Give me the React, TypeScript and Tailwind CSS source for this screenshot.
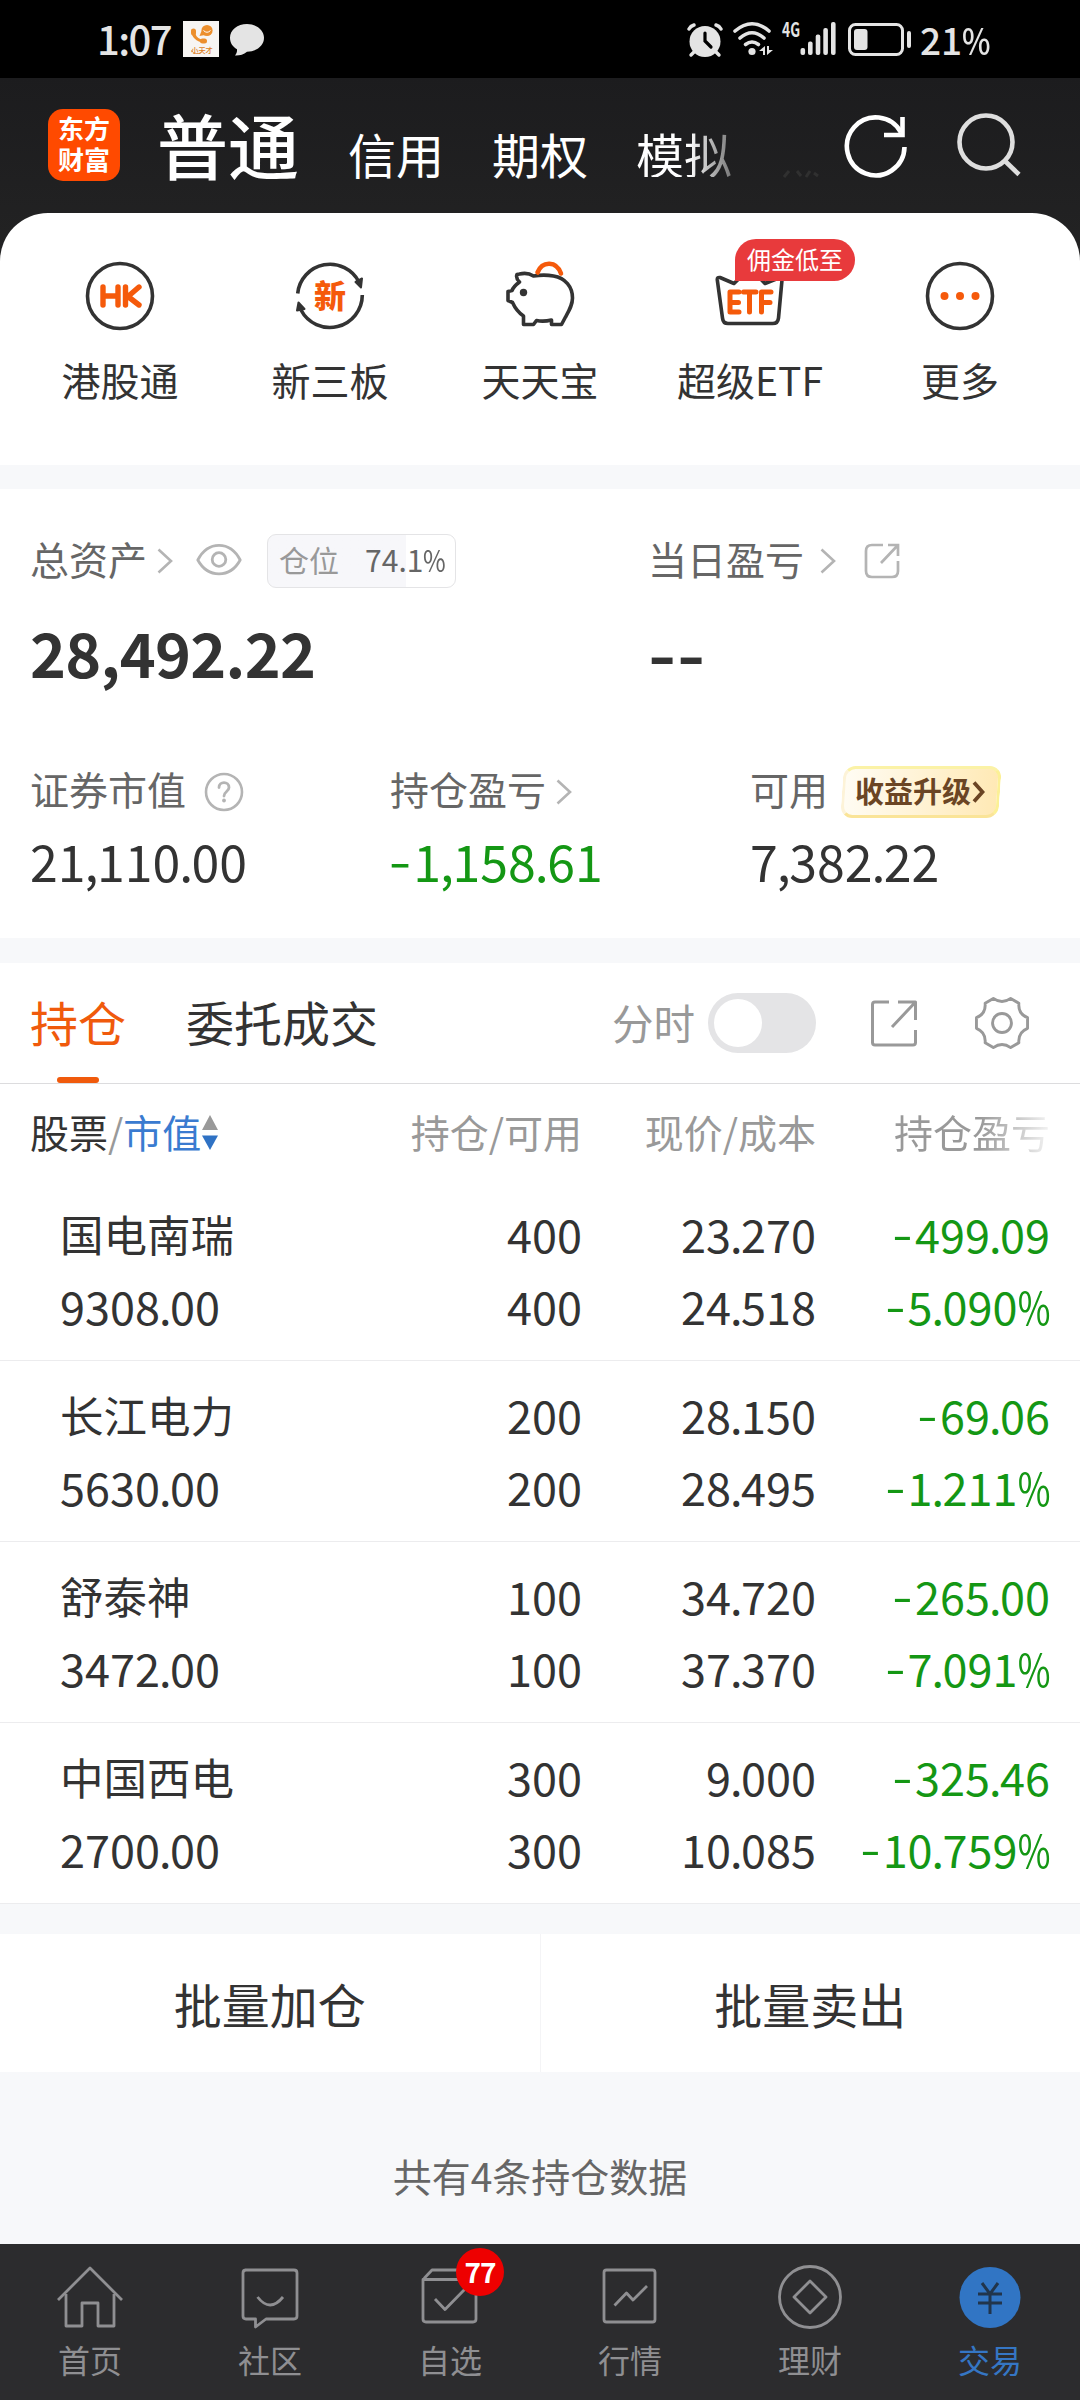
import React from "react";

function Chevron({ className = "" }: { className?: string }) {
  return (
    <svg width="16" height="26" viewBox="0 0 16 26" fill="none" className={className}>
      <path d="M1.5 1.5 L14 13 L1.5 24.5" stroke="#b4b4b4" strokeWidth="2.6" />
    </svg>
  );
}

/* Figures with a wide minus, tight separators and a narrow percent sign */
function Num({ value }: { value: string }) {
  return (
    <>
      {value.split(/([-.,%])/).map((part, i) => {
        if (part === "-")
          return (
            <span key={i} className="mr-[2px] inline-block origin-right -translate-y-[2px] scale-x-[1.3]">
              -
            </span>
          );
        if (part === "%")
          return (
            <span key={i} className="-ml-[9px] inline-block origin-right scale-x-[0.79]">
              %
            </span>
          );
        if (part === "." || part === ",")
          return (
            <span key={i} className="-ml-px -mr-[1.500px]">
              {part}
            </span>
          );
        return <span key={i}>{part}</span>;
      })}
    </>
  );
}

function StatusBar() {
  return (
    <div className="flex h-[78px] items-start bg-black text-[#e4e4e4]">
      <div className="ml-[97px] mt-[16px] w-[76px] whitespace-nowrap text-[40px] font-medium leading-[44px] tracking-[-1.600px]">
        1:07
      </div>
      <svg width="36" height="36" viewBox="0 0 36 36" className="ml-[10px] mt-[21px]">
        <rect width="36" height="36" fill="#f7f5f3" />
        <path d="M10 8.500 C9.500 14.500 13.500 20 22 20.500" fill="none" stroke="#ec8f2d" strokeWidth="3" />
        <rect x="8" y="7.500" width="5" height="7" rx="2.500" fill="#ec8f2d" />
        <rect x="17" y="17.500" width="7" height="5" rx="2.500" fill="#ec8f2d" />
        <circle cx="24" cy="9.500" r="5.600" fill="#ec8f2d" />
        <path d="M18.500 10 L16.500 15 L22 14 Z" fill="#ec8f2d" />
        <path d="M20.500 9.500 Q24 13 27.500 9.500" fill="none" stroke="#fff" strokeWidth="1" />
        <text x="19" y="31.500" textAnchor="middle" fontSize="7.200" fontWeight="500" fill="#dd7d22">
          小天才
        </text>
        <path d="M8 29.500 Q13 34.500 18.500 31.500" fill="none" stroke="#dd7d22" strokeWidth="0.800" />
      </svg>
      <svg width="36" height="34" viewBox="0 0 36 34" className="ml-[10px] mt-[23px]">
        <path
          d="M18 1 C27.500 1 35 7 35 14.800 C35 22.800 27.500 28.700 18 28.700 C14.500 31.500 10.500 32.700 6 32.500 C7.500 30.500 8.300 28.500 8 26.300 C3.500 23.700 1 19.800 1 14.800 C1 7 8.500 1 18 1 Z"
          fill="#e4e4e4"
        />
      </svg>
      <svg width="36" height="36" viewBox="0 0 36 36" className="ml-[422px] mt-[23px]">
        <circle cx="18" cy="18.500" r="15.500" fill="#e4e4e4" />
        <path d="M2 6 Q3.500 3 7 2 M34 6 Q32.500 3 29 2" stroke="#e4e4e4" strokeWidth="3.400" strokeLinecap="round" fill="none" />
        <path d="M7 29 L4 32 M29 29 L32 32" stroke="#e4e4e4" strokeWidth="3.400" strokeLinecap="round" />
        <path d="M18 10 V18 L24 24" stroke="#000" strokeWidth="3.200" strokeLinecap="round" fill="none" />
      </svg>
      <svg width="42" height="36" viewBox="0 0 42 36" className="ml-[9px] mt-[21px]">
        <g fill="none" stroke="#e4e4e4" strokeWidth="3.600" strokeLinecap="round">
          <path d="M3 10 Q20 -4.500 37 10" />
          <path d="M8 17 Q20 6.500 32 17" />
          <path d="M13.500 23.500 Q20 18.500 26.500 23.500" />
        </g>
        <circle cx="20" cy="30.500" r="3.600" fill="#e4e4e4" />
        <path d="M33 25 V34 H31 V30 H27 Z" fill="#e4e4e4" />
        <path d="M35 34 V25 H37 V29 H41 Z" fill="#e4e4e4" />
      </svg>
      <svg width="56" height="38" viewBox="0 0 56 38" className="ml-[8px] mt-[20px] overflow-visible">
        <text x="0" y="17" fontSize="20" fontWeight="700" textLength="18" lengthAdjust="spacingAndGlyphs" fill="#e4e4e4">
          4G
        </text>
        <g fill="#e4e4e4">
          <rect x="18.500" y="28" width="4.600" height="7" rx="2" />
          <rect x="26" y="21.500" width="4.600" height="13.500" rx="2" />
          <rect x="33.700" y="14.500" width="4.600" height="20.500" rx="2" />
          <rect x="41.300" y="8" width="4.600" height="27" rx="2" />
          <rect x="49" y="2" width="4.600" height="33" rx="2" />
        </g>
      </svg>
      <svg width="64" height="34" viewBox="0 0 64 34" className="ml-[10px] mt-[23px]">
        <rect x="1.500" y="1.500" width="53" height="30" rx="6" fill="none" stroke="#e4e4e4" strokeWidth="3" />
        <rect x="6" y="6" width="13.500" height="21" rx="3" fill="#e4e4e4" />
        <rect x="59" y="8" width="4" height="17" rx="2" fill="#e4e4e4" />
      </svg>
      <div className="ml-[8px] mt-[17px] whitespace-nowrap text-[37px] font-medium leading-[44px]">
        21<span className="inline-block origin-left scale-x-[0.82]">%</span>
      </div>
    </div>
  );
}

function Header() {
  return (
    <div className="flex h-[135px] items-start text-white">
      <div className="ml-[48px] mt-[31px] flex h-[72px] w-[72px] flex-col items-center justify-center rounded-[15px] bg-[#ff4a00] pb-[4px] text-[26px] font-bold leading-[31px]">
        <span>东方</span>
        <span>财富</span>
      </div>
      <div className="ml-[37px] mt-[29px] flex items-baseline gap-[48px] whitespace-nowrap">
        <span className="w-[143px] text-[71px] font-medium leading-[72px]">普通</span>
        <span className="text-[48px] leading-[48px]">信用</span>
        <span className="text-[48px] leading-[48px]">期权</span>
        <span className="bg-linear-to-r from-white from-55% to-[#777] bg-clip-text text-[48px] leading-[48px] text-transparent">模拟</span>
      </div>
      <svg width="36" height="8" viewBox="0 0 36 8" className="ml-[51px] mt-[92px]" stroke="#303030" strokeWidth="3">
        <path d="M1 7 L6 1 M14 1 L18 6 M27 1 L23 7 M31 3 L35 6" />
      </svg>
      <svg width="64" height="64" viewBox="0 0 64 64" fill="none" className="ml-[25px] mt-[36px]" stroke="#fff" strokeWidth="4.600">
        <path d="M60.500 33 A28.800 29 0 1 1 57 18.500" />
        <path d="M58.500 3 V21 H40" />
      </svg>
      <svg width="66" height="66" viewBox="0 0 66 66" fill="none" className="ml-[49px] mt-[34px]" stroke="#dedede" strokeWidth="4.600">
        <circle cx="29" cy="30" r="26.500" />
        <path d="M48 49 L62 62.500" />
      </svg>
    </div>
  );
}

const dark = "#333333";
const orange = "#f55a0b";

const hkIcon = (
  <svg width="72" height="72" viewBox="0 0 72 72">
    <circle cx="36" cy="36" r="32.500" fill="none" stroke={dark} strokeWidth="3.600" />
    <g fill="none" stroke={orange} strokeWidth="5.400" strokeLinecap="round" strokeLinejoin="round">
      <path d="M19 27 V45 M34 27 V45 M19 36 H34" />
      <path d="M41.500 27 V45 M55 27 L44 36.500 L55 45" />
    </g>
  </svg>
);

const newBoardIcon = (
  <svg width="72" height="72" viewBox="0 0 72 72">
    <g fill="none" stroke={dark} strokeWidth="3.600">
      <path d="M3.700 33.500 A32.500 32.500 0 0 1 65 22" />
      <path d="M68.300 35 A32.500 32.500 0 0 1 7 50" />
    </g>
    <path d="M61.500 22 L68 18.500 L67 27.500 Z" fill={dark} stroke={dark} strokeWidth="2" strokeLinejoin="round" />
    <path d="M10.500 49 L4.500 42.500 L3 50.500 Z" fill={dark} stroke={dark} strokeWidth="2" strokeLinejoin="round" />
    <text x="36" y="47.500" textAnchor="middle" fontSize="32" fontWeight="900" fill={orange}>
      新
    </text>
  </svg>
);

const piggyIcon = (
  <svg width="72" height="72" viewBox="-1.500 0 72 72" fill="none">
    <path
      d="M14 14 Q22 12 28 16 C34 15 40 14.500 48 16 C60 18 67 27 67 38 C67 45 64 50 60 57 L56 64.500 H46 V60 Q38 62 31 60.500 L28 64.500 H18 V56 C12 52 9.500 48 7 42.500 L2.500 40.500 V31.500 L6.500 30.500 Q8 26.500 14 22 Q10 18 11.500 14.500 Z"
      stroke={dark}
      strokeWidth="3.600"
      strokeLinejoin="round"
    />
    <circle cx="18" cy="32.500" r="3.700" fill={dark} />
    <path d="M32 12.500 C37 0.500 51 1 55.500 13.500" stroke={orange} strokeWidth="4.600" strokeLinecap="round" />
  </svg>
);

const etfIcon = (
  <svg width="72" height="72" viewBox="0 0 72 72" fill="none">
    <path
      d="M6 17.500 L20 23.500 L36 8 L51 23.500 L66 17.500 Q68.500 17 68 20 L64.500 58 Q64 63.500 58.500 63.500 H14 Q9 63.500 8.500 58 L3.300 20 Q3 17 6 17.500 Z"
      stroke={dark}
      strokeWidth="3.600"
      strokeLinejoin="round"
    />
    <g stroke={orange} strokeWidth="5" strokeLinecap="round" strokeLinejoin="round">
      <path d="M25 32 H16 V52 H25 M16 42.500 H24.500" />
      <path d="M29.500 32 H42 M35.500 32 V52" />
      <path d="M57 32 H47.500 V52 M47.500 42.500 H56" />
    </g>
  </svg>
);

const moreIcon = (
  <svg width="72" height="72" viewBox="0 0 72 72">
    <circle cx="36" cy="36" r="32.500" fill="none" stroke={dark} strokeWidth="3.600" />
    <g fill={orange}>
      <circle cx="20.500" cy="36" r="4" />
      <circle cx="36" cy="36" r="4" />
      <circle cx="51.500" cy="36" r="4" />
    </g>
  </svg>
);

const shortcuts = [
  { label: "港股通", icon: hkIcon },
  { label: "新三板", icon: newBoardIcon },
  { label: "天天宝", icon: piggyIcon },
  { label: "超级ETF", icon: etfIcon, badge: "佣金低至" },
  { label: "更多", icon: moreIcon },
];

function Shortcuts() {
  return (
    <div className="grid h-[252px] grid-cols-5 rounded-t-[48px] bg-white px-[15px] pt-[47px]">
      {shortcuts.map((s) => (
        <div key={s.label} className="relative flex flex-col items-center">
          {s.icon}
          <span className="mt-[27px] whitespace-nowrap text-[39px] leading-[40px] text-[#333]">{s.label}</span>
          {s.badge && (
            <span className="absolute -top-[21px] left-[90px] flex h-[42px] w-[120px] items-center justify-center rounded-[21px] rounded-bl-none bg-[#e83a3c] pb-[2px] text-[24px] leading-[24px] text-white">
              {s.badge}
            </span>
          )}
        </div>
      ))}
    </div>
  );
}

function Assets() {
  return (
    <div className="h-[449px] bg-white pl-[30px] text-[39px] leading-[48px] text-[#666]">
      <div className="flex h-[99px] items-end">
        <div className="flex h-[54px] w-[618px] items-center">
          <span className="pb-[6px]">总资产</span>
          <Chevron className="ml-[10px]" />
          <svg width="46" height="34" viewBox="0 0 46 34" fill="none" stroke="#b4b4b4" strokeWidth="2.800" className="-mt-[2px] ml-[23px]">
            <path d="M1.800 17 C12 -2.500 34 -2.500 44.200 17 C34 35.500 12 35.500 1.800 17 Z" strokeLinejoin="round" />
            <circle cx="23" cy="16.500" r="6.800" />
          </svg>
          <div className="ml-[25px] flex h-[54px] w-[189px] items-center justify-between whitespace-nowrap rounded-[9px] border border-[#e4e4e6] bg-linear-to-r from-[#f7f7fa] from-74% to-white to-74% pb-[4px] pl-[11px] pr-[9px] text-[30px] leading-[40px]">
            <span className="text-[#999]">仓位</span>
            <span>
              74.1<span className="-ml-[5px] inline-block origin-right scale-x-[0.82]">%</span>
            </span>
          </div>
        </div>
        <div className="flex h-[54px] items-center">
          <span className="pb-[6px]">当日盈亏</span>
          <Chevron className="ml-[16px]" />
          <svg width="36" height="36" viewBox="0 0 36 36" fill="none" stroke="#b4b4b4" strokeWidth="2.700" className="ml-[28px]">
            <path d="M19 2 H8 Q2 2 2 8 V28 Q2 34 8 34 H28 Q34 34 34 28 V18" />
            <path d="M24 2 H34 V13 M34 2 L17 20" />
          </svg>
        </div>
      </div>
      <div className="mt-[34px] flex h-[62px] items-center font-bold text-[#333]">
        <div className="w-[621px] pb-[2px] text-[61px] leading-[62px] tracking-[-0.700px]">28,492.22</div>
        <div className="flex gap-[3px] pb-[2px] text-[61px] leading-[62px]">
          <span className="inline-block w-[26px] origin-left -translate-x-[3px] scale-x-[1.25]">-</span>
          <span className="inline-block w-[26px] origin-left -translate-x-[3px] scale-x-[1.25]">-</span>
        </div>
      </div>
      <div className="mt-[80px] grid h-[54px] grid-cols-[360px_360px_1fr]">
        <div className="flex items-center">
          <span className="pb-[8px]">证券市值</span>
          <svg width="40" height="40" viewBox="0 0 40 40" className="ml-[18px]">
            <circle cx="20" cy="20" r="18" fill="none" stroke="#b4b4b4" strokeWidth="2.600" />
            <path d="M15 15.500 C15 9 25 9 25 15.500 C25 19.500 20 19.500 20 24" fill="none" stroke="#b4b4b4" strokeWidth="2.800" strokeLinecap="round" />
            <circle cx="20" cy="28.500" r="1.900" fill="#b4b4b4" />
          </svg>
        </div>
        <div className="flex items-center">
          <span className="pb-[8px]">持仓盈亏</span>
          <Chevron className="ml-[10px]" />
        </div>
        <div className="flex items-center">
          <span className="pb-[8px]">可用</span>
          <div className="relative ml-[14px] flex h-[52px] w-[158px] items-center pl-[13px]">
            <div className="absolute inset-0 -skew-x-[4deg] rounded-[12px] border-[3px] border-b-[#fae498] border-l-[#fdf3d8] border-r-[#fcf096] border-t-[#fbf2a6] bg-linear-to-r from-[#fffcf3] to-[#ffe9b5]" />
            <span className="relative whitespace-nowrap pb-[4px] text-[29px] font-bold leading-[40px] text-[#6b4524]">收益升级</span>
            <svg width="13" height="22" viewBox="0 0 13 22" fill="none" stroke="#6b4524" strokeWidth="3.800" className="relative ml-px">
              <path d="M2 1.500 L10.500 11 L2 20.500" />
            </svg>
          </div>
        </div>
      </div>
      <div className="mt-[9px] grid grid-cols-[360px_360px_1fr] text-[50px] leading-[66px] text-[#333]">
        <span>
          <Num value="21,110.00" />
        </span>
        <span className="pl-[4px] text-[#149714]">
          <Num value="-1,158.61" />
        </span>
        <span>
          <Num value="7,382.22" />
        </span>
      </div>
    </div>
  );
}

function Tabs() {
  return (
    <div className="flex h-[121px] items-start border-b border-[#dcdcde] bg-white">
      <div className="ml-[30px] flex h-[120px] w-[96px] flex-col items-center text-[48px] leading-[60px] text-[#f05a0c]">
        <span className="mt-[28px]">持仓</span>
        <span className="mt-[26px] h-[6px] w-[42px] rounded-[3px] bg-[#f05a0c]" />
      </div>
      <div className="ml-[60px] mt-[28px] text-[48px] leading-[60px] text-[#333]">委托成交</div>
      <div className="ml-[234px] mt-[29px] w-[82px] whitespace-nowrap text-[41.500px] leading-[60px] text-[#999]">分时</div>
      <div className="ml-[14px] mt-[30px] flex h-[60px] w-[108px] items-center rounded-full bg-[#e4e4e6] p-[6px]">
        <div className="h-[48px] w-[48px] rounded-full bg-white" />
      </div>
      <svg width="48" height="48" viewBox="0 0 48 48" fill="none" stroke="#999" strokeWidth="3" strokeLinejoin="round" className="ml-[54px] mt-[36px]">
        <path d="M19 3 H5 Q2.500 3 2.500 5.500 V43.500 Q2.500 46 5 46 H43 Q45.500 46 45.500 43.500 V31" />
        <path d="M28 3 H45.500 V21 M45.500 3 L22 28" />
      </svg>
      <svg width="54" height="54" viewBox="0 0 56 56" fill="none" stroke="#999" strokeWidth="3" className="ml-[57px] mt-[33px]">
        <path
          d="M19 2.500 Q28 9 37 2.500 L45.500 7.500 Q44.500 18.500 54.500 22.500 V33.500 Q44.500 37.500 45.500 48.500 L37 53.500 Q28 47 19 53.500 L10.500 48.500 Q11.500 37.500 1.500 33.500 V22.500 Q11.500 18.500 10.500 7.500 Z"
          strokeLinejoin="round"
        />
        <circle cx="28" cy="28" r="9.800" />
      </svg>
    </div>
  );
}

const holdings = [
  { name: "国电南瑞", value: "9308.00", qty: "400", avail: "400", price: "23.270", cost: "24.518", pl: "-499.09", pct: "-5.090%" },
  { name: "长江电力", value: "5630.00", qty: "200", avail: "200", price: "28.150", cost: "28.495", pl: "-69.06", pct: "-1.211%" },
  { name: "舒泰神", value: "3472.00", qty: "100", avail: "100", price: "34.720", cost: "37.370", pl: "-265.00", pct: "-7.091%" },
  { name: "中国西电", value: "2700.00", qty: "300", avail: "300", price: "9.000", cost: "10.085", pl: "-325.46", pct: "-10.759%" },
];

function Holdings() {
  return (
    <div className="bg-white">
      <div className="grid h-[96px] grid-cols-[300px_252px_234px_234px] items-center pb-[3px] pl-[30px] text-[39px] leading-[48px] text-[#999]">
        <div className="flex items-center whitespace-nowrap">
          <span className="text-[#333]">股票</span>
          <span>/</span>
          <span className="text-[#3a7bd0]">市值</span>
          <svg width="16" height="36" viewBox="0 0 16 36" className="ml-px mt-[5px]">
            <path d="M8 0 L16 15 H0 Z" fill="#999" />
            <path d="M8 35 L16 20.500 H0 Z" fill="#2f72c4" />
          </svg>
        </div>
        <div className="text-right">持仓/可用</div>
        <div className="text-right">现价/成本</div>
        <div className="text-right">
          <span className="bg-linear-to-r from-[#999] from-55% to-[#f4f4f4] bg-clip-text text-transparent">持仓盈亏</span>
        </div>
      </div>
      {holdings.map((h) => (
        <div
          key={h.name}
          className="grid h-[181px] grid-cols-[270px_252px_234px_234px] border-b border-[#ececee] pl-[60px] pt-[18px] text-right text-[45px] leading-[72px] text-[#333]"
        >
          <div className="text-left">
            <div className="text-[43.500px]">{h.name}</div>
            <div>
              <Num value={h.value} />
            </div>
          </div>
          <div>
            <div>{h.qty}</div>
            <div>{h.avail}</div>
          </div>
          <div>
            <div>
              <Num value={h.price} />
            </div>
            <div>
              <Num value={h.cost} />
            </div>
          </div>
          <div className="whitespace-nowrap text-[#149714]">
            <div>
              <Num value={h.pl} />
            </div>
            <div>
              <Num value={h.pct} />
            </div>
          </div>
        </div>
      ))}
    </div>
  );
}

const navItems = [
  {
    label: "首页",
    icon: (
      <>
        <path d="M3 36 L35 4 L67 36" />
        <path d="M11 30 V62 H27 V39 H43 V62 H59 V30" />
      </>
    ),
  },
  {
    label: "社区",
    icon: (
      <>
        <path d="M10 6 H59 Q62 6 62 9 V52 Q62 55 59 55 H31 L20.500 63 V55 H11 Q8 55 8 52 V9 Q8 6 11 6" />
        <path d="M22.500 33 Q35 49 48 33" />
      </>
    ),
  },
  {
    label: "自选",
    badge: "77",
    icon: (
      <>
        <path d="M9 14.500 L17 6 H53 L61 14.500" />
        <path d="M8 15.500 H61 V55 Q61 58 58 58 H11 Q8 58 8 55 Z" />
        <path d="M20 35 L30 45.500 L51 24" />
      </>
    ),
  },
  {
    label: "行情",
    icon: (
      <>
        <rect x="9" y="6" width="51" height="52" rx="2.500" />
        <path d="M19.500 41.500 L31.500 29 L38 36 L52 22" />
      </>
    ),
  },
  {
    label: "理财",
    icon: (
      <>
        <circle cx="35" cy="33" r="30.500" />
        <path d="M35 17 L51 33 L35 49 L19 33 Z" />
      </>
    ),
  },
];

function BottomNav() {
  return (
    <div className="grid h-[156px] grid-cols-6 bg-[#2c2c2e] pt-[20px] text-[32px] leading-[40px] text-[#8f8f92]">
      {navItems.map((n) => (
        <div key={n.label} className="relative flex flex-col items-center">
          <svg width="70" height="68" viewBox="0 0 70 68" fill="none" stroke="#8f8f92" strokeWidth="2.800" strokeLinejoin="round">
            {n.icon}
          </svg>
          <span className="mt-[7px]">{n.label}</span>
          {n.badge && (
            <span className="absolute -top-[16px] left-[96px] flex h-[48px] w-[48px] items-center justify-center rounded-full bg-[#ee0000] pb-[2px] text-[28px] font-bold leading-[28px] tracking-[-1px] text-white">
              {n.badge}
            </span>
          )}
        </div>
      ))}
      <div className="flex flex-col items-center text-[#3576c4]">
        <svg width="70" height="68" viewBox="0 0 70 68">
          <circle cx="35" cy="33.500" r="30.500" fill="#3175c4" />
          <path d="M27 19 L35 30 L43 19 M35 30 V50 M23 30 H47 M23 39 H47" fill="none" stroke="#21354c" strokeWidth="3" />
        </svg>
        <span className="mt-[7px]">交易</span>
      </div>
    </div>
  );
}

export default function App() {
  return (
    <div className="flex h-[2400px] w-[1080px] flex-col overflow-hidden bg-[#f7f8fa] font-['Noto_Sans_CJK_SC',sans-serif]">
      <StatusBar />
      <div className="bg-linear-to-b from-[#1c1c1e] to-[#252525] to-60%">
        <Header />
        <Shortcuts />
      </div>
      <div className="h-[24px]" />
      <Assets />
      <div className="h-[25px]" />
      <Tabs />
      <Holdings />
      <div className="mt-[30px] flex h-[138px] items-center bg-white text-center text-[48px] leading-[60px] text-[#333]">
        <div className="flex h-full flex-1 items-center justify-center border-r border-[#f4f4f6]">批量加仓</div>
        <div className="flex h-full flex-1 items-center justify-center">批量卖出</div>
      </div>
      <div className="flex flex-1 items-center justify-center pt-[34px] text-[39px] leading-[48px] text-[#666]">共有4条持仓数据</div>
      <BottomNav />
    </div>
  );
}
